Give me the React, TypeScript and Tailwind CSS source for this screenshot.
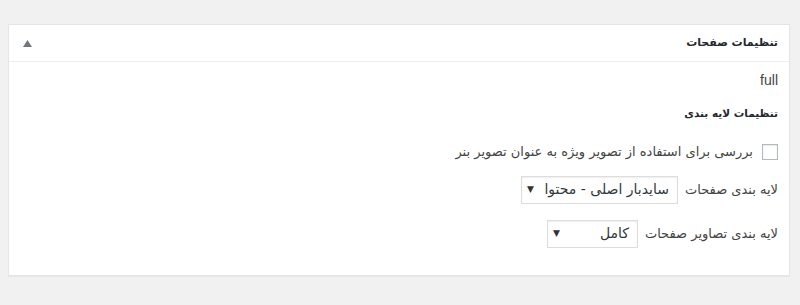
import React from "react";

function FakeSelect({ value, width }: { value: string; width: string }) {
  return (
    <div
      className={`flex h-[28px] items-center justify-between whitespace-nowrap border border-[#dddddd] bg-white pr-[8px] pl-[5px] shadow-[inset_0_1px_2px_rgba(0,0,0,0.07)] ${width}`}
    >
      <span className="text-[14px] text-[#32373c]">{value}</span>
      <span className="text-[9px] text-[#333]">▼</span>
    </div>
  );
}

export default function App() {
  return (
    <div
      dir="rtl"
      className="h-[305px] w-[800px] bg-[#f1f1f1] pt-[24px] pr-[10px] pl-[8px]"
      style={{ fontFamily: '"DejaVu Sans", Tahoma, sans-serif' }}
    >
      <div className="h-[252px] border border-[#e5e5e5] bg-white shadow-[0_1px_1px_rgba(0,0,0,0.04)]">
        <div className="flex h-[37px] items-center justify-between border-b border-[#eeeeee] pr-[11px] pl-[14px]">
          <span className="text-[11px] font-bold text-[#23282d]">تنظیمات صفحات</span>
          <svg width="9" height="7" viewBox="0 0 9 7">
            <polygon points="4.5,0 9,7 0,7" fill="#72777c" />
          </svg>
        </div>
        <div className="pr-[11px] pt-[9px] text-[#444]">
          <div className="text-[14px] leading-[18px]" style={{ fontFamily: '"Liberation Sans", Arial, sans-serif' }}>
            full
          </div>
          <div className="mt-[17px] text-[10.5px] font-bold leading-[14px] text-[#23282d]">تنظیمات لایه بندی</div>
          <div className="mt-[22px] flex items-center gap-[9px]">
            <div className="h-[16px] w-[16px] border border-[#b4b9be] bg-white shadow-[inset_0_1px_2px_rgba(0,0,0,0.1)]" />
            <span className="text-[13px] text-[#444]">بررسی برای استفاده از تصویر ویژه به عنوان تصویر بنر</span>
          </div>
          <div className="mt-[14px] flex items-center gap-[7px]">
            <span className="text-[13px] text-[#444]">لایه بندی صفحات</span>
            <FakeSelect value="سایدبار اصلی - محتوا" width="w-[157px]" />
          </div>
          <div className="mt-[16px] flex items-center gap-[7px]">
            <span className="text-[13px] text-[#444]">لایه بندی تصاویر صفحات</span>
            <FakeSelect value="کامل" width="w-[91px]" />
          </div>
        </div>
      </div>
    </div>
  );
}
